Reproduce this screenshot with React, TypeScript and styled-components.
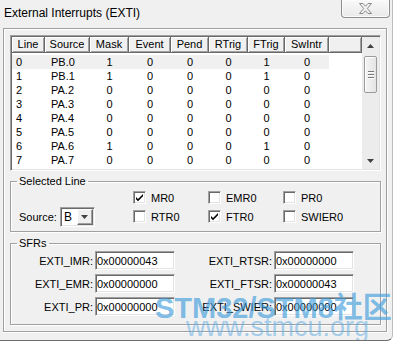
import styled, { createGlobalStyle } from "styled-components";

const Global = createGlobalStyle`
  html, body {
    margin: 0;
    background: #ffffff;
  }
  body {
    font-family: "Liberation Sans", Arial, sans-serif;
    font-size: 11px;
    color: #000;
  }
`;

const Window = styled.div`
  position: relative;
  width: 392px;
  height: 340px;
  background: #f0f0f0;
  border-right: 1px solid #bdbdbd;
  border-bottom: 1px solid #6e6e6e;
  border-bottom-right-radius: 6px;
  overflow: hidden;
`;

const TitleBar = styled.div`
  display: flex;
  justify-content: space-between;
  align-items: flex-start;
  height: 28px;
`;

const Title = styled.div`
  padding: 6px 0 0 4px;
  font-size: 12px;
  line-height: 14px;
`;

const CloseBtn = styled.div`
  display: flex;
  align-items: center;
  justify-content: center;
  width: 47px;
  height: 17px;
  margin-right: 2px;
  border: 1px solid #8e8e8e;
  border-top: none;
  border-radius: 0 0 4px 4px;
  background: linear-gradient(#f9f9f9, #e9e9e9);
  box-shadow: inset 0 0 0 1px #fbfbfb;
`;

const Panel = styled.div`
  margin: 0 5px 0 3px;
  padding: 6px 5px 6px 6px;
  border: 1px solid #a0a0a0;
  box-shadow: inset 1px 1px 0 #fff, 1px 1px 0 #fff;
`;

const ListBox = styled.div`
  display: flex;
  height: 136px;
  box-sizing: border-box;
  padding: 1px;
  background: #fff;
  border: 1px solid;
  border-color: #a0a0a0 #fff #fff #a0a0a0;
  box-shadow: inset 1px 1px 0 #696969, inset -1px -1px 0 #e3e3e3;
`;

const Table = styled.div`
  flex: 1;
  overflow: hidden;
`;

const cols = "33px 45px 39px 42px 38px 39px 37px 44px";

const Header = styled.div`
  display: grid;
  grid-template-columns: ${cols} 1fr;
  height: 16px;
  background: #f0f0f0;
`;

const HeadCell = styled.div`
  box-sizing: border-box;
  border-right: 1px solid #696969;
  border-bottom: 1px solid #696969;
  box-shadow: inset 1px 1px 0 #fff, inset -1px -1px 0 #a0a0a0;
  text-align: center;
  line-height: 15px;
`;

const Rows = styled.div`
  padding-top: 2px;
`;

const Row = styled.div<{ $sel?: boolean }>`
  display: grid;
  grid-template-columns: ${cols};
  width: 317px;
  height: 14px;
  line-height: 14px;
  background: ${(p) => (p.$sel ? "#f0f0f0" : "transparent")};
`;

const Cell = styled.div<{ $align?: "left" | "center"; $pad?: number }>`
  text-align: ${(p) => p.$align ?? "center"};
  padding-left: ${(p) => p.$pad ?? 0}px;
`;

const ScrollBar = styled.div`
  display: flex;
  flex-direction: column;
  width: 17px;
  background: #ececec;
`;

const ArrowBtn = styled.div`
  display: flex;
  align-items: center;
  justify-content: center;
  height: 17px;
`;

const Track = styled.div`
  flex: 1;
`;

const Thumb = styled.div`
  display: flex;
  flex-direction: column;
  align-items: center;
  justify-content: center;
  gap: 2px;
  height: 37px;
  margin: 2px 2px 0 2px;
  box-sizing: border-box;
  border: 1px solid #9a9a9a;
  border-radius: 2px;
  background: linear-gradient(90deg, #f4f4f4, #e4e4e4);
  box-shadow: inset 1px 1px 0 #fff;
`;

const Grip = styled.div`
  width: 6px;
  height: 1px;
  background: #7a7a7a;
  box-shadow: 0 1px 0 #fff;
`;

const Group = styled.fieldset<{ $gap: number }>`
  margin: ${(p) => p.$gap}px 0 0;
  padding: 0 6px ${(p) => (p.$gap === 4 ? 5 : 8)}px;
  border: 1px solid #a0a0a0;
  box-shadow: inset 1px 1px 0 #fff, 1px 1px 0 #fff;
  min-width: 0;
`;

const Legend = styled.legend`
  padding: 0 2px;
  line-height: 13px;
`;

const SelGrid = styled.div`
  display: grid;
  grid-template-columns: 116px 75px 75px 1fr;
  grid-template-rows: 19px 19px;
`;

const SourceBox = styled.div`
  grid-row: 2;
  grid-column: 1;
  display: flex;
  align-items: center;
  padding-left: 2px;
`;

const SourceLabel = styled.span`
  margin-right: 3px;
`;

const Combo = styled.div`
  display: flex;
  align-items: center;
  justify-content: space-between;
  width: 35px;
  height: 20px;
  box-sizing: border-box;
  padding: 1px;
  background: #fff;
  border: 1px solid;
  border-color: #a0a0a0 #fff #fff #a0a0a0;
  box-shadow: inset 1px 1px 0 #696969, inset -1px -1px 0 #e3e3e3;
`;

const ComboText = styled.span`
  padding-left: 2px;
  font-size: 12px;
`;

const DropBtn = styled.div`
  display: flex;
  align-items: center;
  justify-content: center;
  width: 16px;
  height: 16px;
  box-sizing: border-box;
  background: #f0f0f0;
  border: 1px solid;
  border-color: #fff #696969 #696969 #fff;
  box-shadow: inset -1px -1px 0 #a0a0a0;
`;

const Check = styled.label<{ $col: number; $row: number }>`
  grid-column: ${(p) => p.$col};
  grid-row: ${(p) => p.$row};
  display: flex;
  align-items: center;
  gap: 5px;
`;

const Box = styled.span`
  display: flex;
  align-items: center;
  justify-content: center;
  width: 13px;
  height: 13px;
  box-sizing: border-box;
  background: #fff;
  border: 1px solid;
  border-color: #a0a0a0 #fff #fff #a0a0a0;
  box-shadow: inset 1px 1px 0 #696969, inset -1px -1px 0 #e3e3e3;
`;

const SfrGrid = styled.div`
  display: grid;
  grid-template-columns: 76px 80px 95px 80px;
  grid-auto-rows: 19px;
  column-gap: 2px;
  row-gap: 4px;
  padding-top: 1px;
`;

const SfrLabel = styled.span`
  display: flex;
  align-items: center;
  justify-content: flex-end;
`;

const SfrInput = styled.div`
  display: flex;
  align-items: center;
  box-sizing: border-box;
  padding-left: 1px;
  background: #fff;
  border: 1px solid;
  border-color: #a0a0a0 #fff #fff #a0a0a0;
  box-shadow: inset 1px 1px 0 #696969, inset -1px -1px 0 #e3e3e3;
`;

const Watermark = styled.div`
  position: absolute;
  left: 155px;
  top: 294px;
  white-space: nowrap;
  pointer-events: none;
`;

const MarkBig = styled.div`
  font-family: "Liberation Sans", "Noto Sans CJK SC", sans-serif;
  font-weight: bold;
  font-size: 29px;
  line-height: 29px;
  color: rgba(60, 155, 220, 0.65);
`;

const MarkUrl = styled.div`
  margin: -9px 0 0 31px;
  font-family: "Liberation Sans", sans-serif;
  font-size: 27px;
  line-height: 26px;
  color: rgba(100, 175, 228, 0.55);
`;

const heads = ["Line", "Source", "Mask", "Event", "Pend", "RTrig", "FTrig", "SwIntr", ""];

const data: [string, number[]][] = [
  ["PB.0", [1, 0, 0, 0, 1, 0]],
  ["PB.1", [1, 0, 0, 0, 1, 0]],
  ["PA.2", [0, 0, 0, 0, 0, 0]],
  ["PA.3", [0, 0, 0, 0, 0, 0]],
  ["PA.4", [0, 0, 0, 0, 0, 0]],
  ["PA.5", [0, 0, 0, 0, 0, 0]],
  ["PA.6", [1, 0, 0, 0, 1, 0]],
  ["PA.7", [0, 0, 0, 0, 0, 0]],
];

const checks = [
  { label: "MR0", col: 2, row: 1, on: true },
  { label: "EMR0", col: 3, row: 1, on: false },
  { label: "PR0", col: 4, row: 1, on: false },
  { label: "RTR0", col: 2, row: 2, on: false },
  { label: "FTR0", col: 3, row: 2, on: true },
  { label: "SWIER0", col: 4, row: 2, on: false },
];

const sfrs = [
  ["EXTI_IMR:", "0x00000043", "EXTI_RTSR:", "0x00000000"],
  ["EXTI_EMR:", "0x00000000", "EXTI_FTSR:", "0x00000043"],
  ["EXTI_PR:", "0x00000000", "EXTI_SWIER:", "0x00000000"],
];

function Tri({ up }: { up?: boolean }) {
  return (
    <svg width="7" height="4" viewBox="0 0 7 4">
      <path d={up ? "M0 4 L3.5 0 L7 4 Z" : "M0 0 L7 0 L3.5 4 Z"} fill="#404040" />
    </svg>
  );
}

export default function App() {
  return (
    <Window>
      <Global />
      <TitleBar>
        <Title>External Interrupts (EXTI)</Title>
        <CloseBtn>
          <svg width="15" height="11" viewBox="0 0 15 11">
            <path
              d="M1.5 0.5 H5 L7.5 3.2 L10 0.5 H13.5 L9.3 5.5 L13.5 10.5 H10 L7.5 7.8 L5 10.5 H1.5 L5.7 5.5 Z"
              fill="#f2f2f2"
              stroke="#8a8a8a"
              strokeWidth="1"
            />
          </svg>
        </CloseBtn>
      </TitleBar>

      <Panel>
        <ListBox>
          <Table>
            <Header>
              {heads.map((h, i) => (
                <HeadCell key={i}>{h}</HeadCell>
              ))}
            </Header>
            <Rows>
              {data.map(([src, vals], i) => (
                <Row key={i} $sel={i === 0}>
                  <Cell $align="left" $pad={4}>{i}</Cell>
                  <Cell $align="left" $pad={6}>{src}</Cell>
                  {vals.map((v, j) => (
                    <Cell key={j}>{v}</Cell>
                  ))}
                </Row>
              ))}
            </Rows>
          </Table>
          <ScrollBar>
            <ArrowBtn><Tri up /></ArrowBtn>
            <Track>
              <Thumb>
                <Grip />
                <Grip />
                <Grip />
              </Thumb>
            </Track>
            <ArrowBtn><Tri /></ArrowBtn>
          </ScrollBar>
        </ListBox>

        <Group $gap={4}>
          <Legend>Selected Line</Legend>
          <SelGrid>
            {checks.map((c) => (
              <Check key={c.label} $col={c.col} $row={c.row}>
                <Box>
                  {c.on && (
                    <svg width="9" height="9" viewBox="0 0 9 9">
                      <path d="M1 4 L3 6 L8 1 L8 3.3 L3 8.3 L1 6.3 Z" fill="#000" />
                    </svg>
                  )}
                </Box>
                {c.label}
              </Check>
            ))}
            <SourceBox>
              <SourceLabel>Source:</SourceLabel>
              <Combo>
                <ComboText>B</ComboText>
                <DropBtn><Tri /></DropBtn>
              </Combo>
            </SourceBox>
          </SelGrid>
        </Group>

        <Group $gap={5}>
          <Legend>SFRs</Legend>
          <SfrGrid>
            {sfrs.map((r) =>
              r.map((t, j) =>
                j % 2 === 0 ? <SfrLabel key={t}>{t}</SfrLabel> : <SfrInput key={r[j - 1]}>{t}</SfrInput>
              )
            )}
          </SfrGrid>
        </Group>
      </Panel>

      <Watermark>
        <MarkBig>STM32/STM8社区</MarkBig>
        <MarkUrl>www.stmcu.org</MarkUrl>
      </Watermark>
    </Window>
  );
}
